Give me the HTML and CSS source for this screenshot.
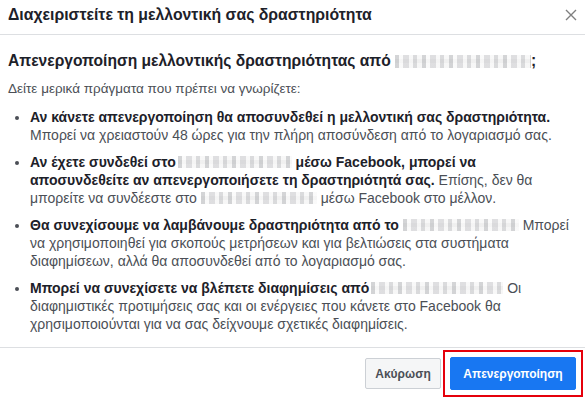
FILE: index.html
```html
<!DOCTYPE html>
<html lang="el">
<head>
<meta charset="utf-8">
<link rel="stylesheet" href="styles.css">
</head>
<body>
<div class="dialog">
  <div class="header">
    <span class="title">Διαχειριστείτε τη μελλοντική σας δραστηριότητα</span>
    <svg class="close" width="12" height="12" viewBox="0 0 12 12"><path d="M1 1 L11 11 M11 1 L1 11" stroke="#7f7f7f" stroke-width="1.4" fill="none"/></svg>
  </div>
  <div class="body">
    <h2 class="heading">Απενεργοποίηση μελλοντικής δραστηριότητας από <span class="blur b-head"></span>;</h2>
    <p class="intro">Δείτε μερικά πράγματα που πρέπει να γνωρίζετε:</p>
    <ul class="list">
      <li><b>Αν κάνετε απενεργοποίηση θα αποσυνδεθεί η μελλοντική σας δραστηριότητα.</b><br>Μπορεί να χρειαστούν 48 ώρες για την πλήρη αποσύνδεση από το λογαριασμό σας.</li>
      <li><b>Αν έχετε συνδεθεί στο<span class="blur b-2a"></span> μέσω Facebook, μπορεί να<br>αποσυνδεθείτε αν απενεργοποιήσετε τη δραστηριότητά σας.</b> Επίσης, δεν θα<br>μπορείτε να συνδέεστε στο <span class="blur b-2b"></span> μέσω Facebook στο μέλλον.</li>
      <li><b>Θα συνεχίσουμε να λαμβάνουμε δραστηριότητα από το <span class="blur b-3"></span></b> Μπορεί<br>να χρησιμοποιηθεί για σκοπούς μετρήσεων και για βελτιώσεις στα συστήματα<br>διαφημίσεων, αλλά θα αποσυνδεθεί από το λογαριασμό σας.</li>
      <li><b>Μπορεί να συνεχίσετε να βλέπετε διαφημίσεις από<span class="blur b-4"></span></b> Οι<br>διαφημιστικές προτιμήσεις σας και οι ενέργειες που κάνετε στο Facebook θα<br>χρησιμοποιούνται για να σας δείχνουμε σχετικές διαφημίσεις.</li>
    </ul>
  </div>
  <div class="footer">
    <button class="btn btn-cancel">Ακύρωση</button>
    <div class="highlight">
      <button class="btn btn-primary">Απενεργοποίηση</button>
    </div>
  </div>
</div>
</body>
</html>
```

FILE: styles.css
```css
* { box-sizing: border-box; }
html, body {
  margin: 0;
  padding: 0;
  background: #ffffff;
}
body {
  width: 585px;
  height: 398px;
  overflow: hidden;
  font-family: "Liberation Sans", Arial, sans-serif;
  color: #1d2129;
}
.dialog {
  display: flex;
  flex-direction: column;
  height: 398px;
}
.header {
  height: 35px;
  border-bottom: 1px solid #dddfe2;
  display: flex;
  align-items: center;
  justify-content: space-between;
  padding: 0 8px 5px 8px;
}
.title {
  font-size: 15.8px;
  font-weight: bold;
  color: #1d2129;
}
.close { display: block; margin-top: 1px; }
.body {
  flex: 1;
  padding: 16px 8px 0 8px;
}
.heading {
  margin: 0;
  font-size: 15.6px;
  font-weight: bold;
  line-height: 20px;
  color: #1d2129;
}
.intro {
  margin: 9px 0 0 0;
  font-size: 13.5px;
  line-height: 17px;
  color: #4b4f56;
}
.list {
  margin: 11px 0 0 0;
  padding: 0 0 0 22px;
  font-size: 14px;
  line-height: 18px;
  color: #4b4f56;
  white-space: nowrap;
}
.list li {
  margin-bottom: 9px;
}
.list b {
  color: #1d2129;
}
.blur {
  display: inline-block;
  height: 12px;
  vertical-align: -1px;
  background-color: #ececec;
  background-image:
    repeating-linear-gradient(90deg, rgba(170,172,176,0.45) 0 4px, rgba(255,255,255,0.5) 4px 8px, rgba(200,200,204,0.5) 8px 14px, rgba(250,250,250,0.6) 14px 18px, rgba(185,186,190,0.45) 18px 22px, rgba(255,255,255,0.2) 22px 27px),
    linear-gradient(180deg, rgba(255,255,255,0.55) 0 4px, rgba(0,0,0,0) 4px 8px, rgba(255,255,255,0.45) 8px 12px);
}
.b-head { width: 136px; height: 13px; vertical-align: -2px; }
.b-2a { width: 114px; margin-left: 2px; }
.b-2b { width: 116px; }
.b-3 { width: 116px; }
.b-4 { width: 132px; margin-left: 2px; }
.footer {
  height: 51px;
  border-top: 1px solid #dddfe2;
  display: flex;
  align-items: center;
  justify-content: flex-end;
  gap: 2px;
  padding: 1px 2px 0 0;
}
.btn {
  font-family: "Liberation Sans", Arial, sans-serif;
  font-size: 12px;
  font-weight: bold;
  border-radius: 2px;
  padding: 0;
  cursor: pointer;
}
.btn-cancel {
  background: #f5f6f7;
  border: 1px solid #ccd0d5;
  color: #4b4f56;
  width: 76px;
  height: 31px;
}
.btn-primary {
  background: #1877f2;
  border: 1px solid #1877f2;
  color: #ffffff;
  width: 126px;
  height: 33px;
}
.highlight {
  border: 2px solid #e5000b;
  padding: 5px;
  display: flex;
}
```
